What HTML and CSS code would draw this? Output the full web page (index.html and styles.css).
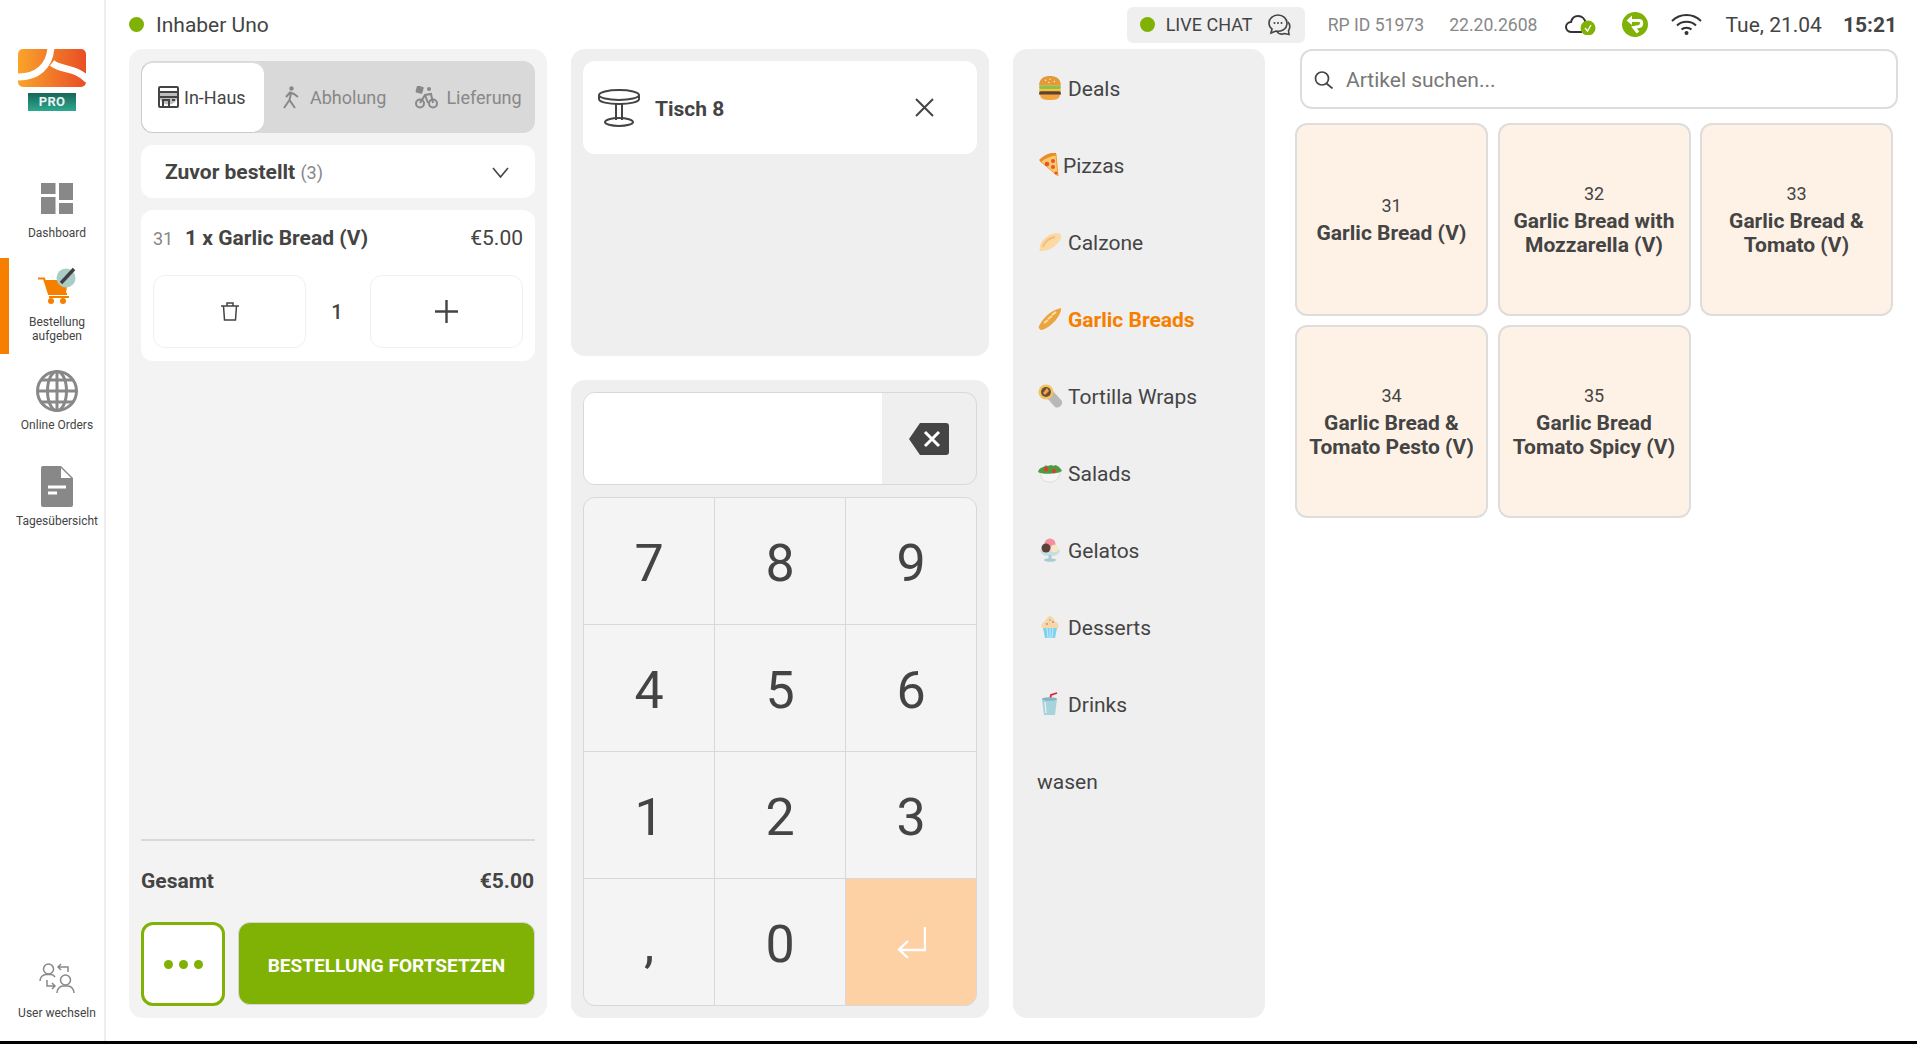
FILE: index.html
```html
<!DOCTYPE html>
<html lang="de">
<head>
<meta charset="utf-8">
<title>Bestellung</title>
<link rel="stylesheet" href="styles.css">
</head>
<body>
<div class="app">
  <aside class="sidebar">
    <div class="brand">
      <svg class="logo" viewBox="0 0 68 38">
        <defs>
          <linearGradient id="lg" x1="0" x2="1" y1="0" y2="0"><stop offset="0" stop-color="#f9a42b"/><stop offset="1" stop-color="#e94e25"/></linearGradient>
          <clipPath id="lc"><rect width="68" height="38" rx="5"/></clipPath>
        </defs>
        <g clip-path="url(#lc)">
          <rect width="68" height="38" fill="url(#lg)"/>
          <path d="M33-2C32 16 20 29-2 28" fill="none" stroke="#fff" stroke-width="7"/>
          <path d="M34 14C44 22 56 17 70 31" fill="none" stroke="#fff" stroke-width="7"/>
        </g>
      </svg>
      <div class="pro">PRO</div>
    </div>
    <nav class="nav">
      <a class="nav-item nav-dashboard">
        <svg class="nav-icon" width="32" height="31" viewBox="0 0 32 31"><g fill="#888"><rect width="14.5" height="11"/><rect y="14" width="14.5" height="17"/><rect x="18" width="14.5" height="17"/><rect x="18" y="20" width="14.5" height="11"/></g></svg>
        <span>Dashboard</span>
      </a>
      <a class="nav-item nav-active">
        <svg class="nav-icon" width="38" height="37" viewBox="0 0 38 37">
          <path d="M0 11.500H6L11 27H29" fill="none" stroke="#f77f00" stroke-width="2.200"/>
          <path d="M7 13H30L28 26H11Z" fill="#f77f00"/>
          <path d="M11 29H31V31H11Z" fill="#f77f00"/>
          <circle cx="13" cy="34" r="3" fill="#f77f00"/><circle cx="25" cy="34" r="3" fill="#f77f00"/>
          <circle cx="28" cy="11" r="9.500" fill="#a9cdc6"/>
          <path d="M23 16L36 2" stroke="#3f3f3f" stroke-width="3.400"/>
        </svg>
        <span>Bestellung<br>aufgeben</span>
      </a>
      <a class="nav-item nav-online">
        <svg class="nav-icon" width="42" height="42" viewBox="0 0 42 42"><g fill="none" stroke="#888" stroke-width="3"><circle cx="21" cy="21" r="19.500"/><ellipse cx="21" cy="21" rx="9.500" ry="19.500"/><path d="M21 1V41M2 21H40M5 10H37M5 32H37"/></g></svg>
        <span>Online Orders</span>
      </a>
      <a class="nav-item nav-report">
        <svg class="nav-icon" width="32" height="41" viewBox="0 0 32 41"><path d="M2 0H20L32 12V39a2 2 0 0 1-2 2H2a2 2 0 0 1-2-2V2a2 2 0 0 1 2-2Z" fill="#888"/><path d="M20 2L30 12H20Z" fill="#fff"/><path d="M7 21H25M7 27H16" stroke="#fff" stroke-width="3"/></svg>
        <span>Tagesübersicht</span>
      </a>
    </nav>
    <a class="nav-item nav-user">
      <svg class="nav-icon" width="36" height="30" viewBox="0 0 36 30"><g fill="none" stroke="#888" stroke-width="1.500"><circle cx="9.500" cy="6" r="5"/><path d="M1 18C1 14 4 11.500 7 11.500H12C14 11.500 15 12.500 16 14"/><circle cx="26.500" cy="17" r="5"/><path d="M18 30C18 26 21 23 24 23H29C32 23 35 26 35 30"/><path d="M29 9V4H19M22 1L19 4L22 7"/><path d="M8 17V23H16M13 20L16 23L13 26"/></g></svg>
      <span>User wechseln</span>
    </a>
  </aside>

  <main class="main">
    <header class="topbar">
      <span class="dot"></span>
      <span class="user-name">Inhaber Uno</span>
      <div class="top-right">
        <div class="live-chat">
          <span class="dot dot-chat"></span>
          <span>LIVE CHAT</span>
          <svg width="23" height="22" viewBox="0 0 23 22"><g fill="none" stroke="#444" stroke-width="1.600"><path d="M10 1C5 1 1 4.500 1 9C1 11.500 2 13.500 4 15L3 19L8 17C12 18 19 16 19 9C19 4.500 15 1 10 1Z"/><path d="M20 8C22 10 22.500 14 20.500 16.500L21 20.500L16.500 19.500C14 20.500 11 20 9 18"/></g><g fill="#444"><circle cx="6.500" cy="9" r="1"/><circle cx="10" cy="9" r="1"/><circle cx="13.500" cy="9" r="1"/></g></svg>
        </div>
        <span class="meta meta-id">RP ID 51973</span>
        <span class="meta">22.20.2608</span>
        <svg class="cloud" width="31" height="20" viewBox="0 0 31 20"><path d="M7 17C3 17 1 14.500 1 12C1 9 3.500 7 6 7C7 3 10 1 13 1C17 1 20 4 20.500 8" fill="none" stroke="#333" stroke-width="2"/><path d="M7 17H17" stroke="#333" stroke-width="2"/><circle cx="23" cy="13" r="7.500" fill="#7fb204"/><path d="M20 13L22.500 16L26 10" fill="none" stroke="#fff" stroke-width="1.300"/></svg>
        <svg class="sync" width="26" height="25" viewBox="0 0 26 25"><ellipse cx="13" cy="12.500" rx="13" ry="12.500" fill="#7fb204"/><path d="M8 8.500H17C20.500 8.500 20.500 13.500 17 14.500L12 15.500L16 20.500" fill="none" stroke="#fff" stroke-width="3.200"/><path d="M10 3.500L4.500 8.500L10 13" fill="#fff"/></svg>
        <svg class="wifi" width="31" height="21" viewBox="0 0 31 21"><g fill="none" stroke="#333" stroke-width="2"><path d="M1 7C9-1 22-1 30 7"/><path d="M6 11.500C11 6.500 20 6.500 25 11.500"/><path d="M10.500 15.500C13 13 18 13 20.500 15.500"/></g><circle cx="15.500" cy="19" r="2" fill="#333"/></svg>
        <span class="date">Tue, 21.04</span>
        <strong class="time">15:21</strong>
      </div>
    </header>

    <div class="columns">
      <section class="panel panel-order">
        <div class="tabs">
          <div class="tab tab-active">
            <svg width="21" height="22" viewBox="0 0 21 22"><g fill="none" stroke="#444" stroke-width="2"><rect x="1" y="1" width="19" height="20" rx="1"/><path d="M1 6H20M1 11H20M5 21V14H11V21M14 14H17"/></g><path d="M1 6H20V9a2 2 0 0 1-19 0Z" fill="#444" opacity=".35"/></svg>
            <span>In-Haus</span>
          </div>
          <div class="tab tab-pickup">
            <svg width="16" height="23" viewBox="0 0 16 23"><circle cx="8.500" cy="2.500" r="2.200" fill="#888"/><path d="M3 11L7 6.500L11 8L15 11M8 7L6.500 14L12 22M6.500 14L1 22" fill="none" stroke="#888" stroke-width="2"/></svg>
            <span>Abholung</span>
          </div>
          <div class="tab tab-delivery">
            <svg width="23" height="23" viewBox="0 0 23 23"><rect x="1" y="0" width="7" height="7" rx="1" transform="rotate(15 4 4)" fill="#888"/><circle cx="14" cy="3" r="2" fill="#888"/><g fill="none" stroke="#888" stroke-width="2"><circle cx="5" cy="17.500" r="4"/><circle cx="18" cy="17.500" r="4"/><path d="M5 17L10 9L16 8L18 17M10 9L13 17"/></g></svg>
            <span>Lieferung</span>
          </div>
        </div>
        <div class="previous">
          <span class="previous-title">Zuvor bestellt <span class="previous-count">(3)</span></span>
          <svg width="17" height="11" viewBox="0 0 17 11"><path d="M1 1L8.500 10L16 1" fill="none" stroke="#444" stroke-width="1.600"/></svg>
        </div>
        <div class="item">
          <div class="item-row">
            <span class="item-no">31</span>
            <strong class="item-name">1 x Garlic Bread (V)</strong>
            <span class="item-price">€5.00</span>
          </div>
          <div class="item-actions">
            <div class="qty-btn">
              <svg width="18" height="19" viewBox="0 0 18 19"><g fill="none" stroke="#444" stroke-width="1.500"><path d="M0 4H18M6 4V1H12V4M2.500 4L3.500 18H14.500L15.500 4"/></g></svg>
            </div>
            <span class="qty">1</span>
            <div class="qty-btn">
              <svg width="23" height="23" viewBox="0 0 23 23"><path d="M0 11.500H23M11.500 0V23" stroke="#444" stroke-width="2.400"/></svg>
            </div>
          </div>
        </div>
        <div class="spacer"></div>
        <div class="total">
          <span>Gesamt</span>
          <span>€5.00</span>
        </div>
        <div class="order-actions">
          <button class="more"><i></i><i></i><i></i></button>
          <button class="submit">BESTELLUNG FORTSETZEN</button>
        </div>
      </section>

      <div class="col-mid">
        <section class="panel panel-table">
          <div class="table-card">
            <svg width="42" height="38" viewBox="0 0 42 38"><g fill="none" stroke="#444" stroke-width="2"><ellipse cx="21" cy="6" rx="20" ry="5"/><path d="M1 6V10C1 13 10 15 21 15C32 15 41 13 41 10V6"/><path d="M18 15V31M24 15V31"/><ellipse cx="21" cy="33" rx="14" ry="4"/></g></svg>
            <strong class="table-name">Tisch 8</strong>
            <svg class="table-close" width="19" height="19" viewBox="0 0 19 19"><path d="M1 1L18 18M18 1L1 18" stroke="#444" stroke-width="2"/></svg>
          </div>
        </section>
        <section class="panel panel-pad">
          <div class="display">
            <div class="display-input"></div>
            <div class="display-del">
              <svg width="40" height="32" viewBox="0 0 40 32"><path d="M11 0H37a3 3 0 0 1 3 3V29a3 3 0 0 1-3 3H11L0 16Z" fill="#444"/><path d="M16 9L30 23M30 9L16 23" stroke="#fff" stroke-width="3"/></svg>
            </div>
          </div>
          <div class="keys">
            <div class="key">7</div><div class="key">8</div><div class="key">9</div>
            <div class="key">4</div><div class="key">5</div><div class="key">6</div>
            <div class="key">1</div><div class="key">2</div><div class="key">3</div>
            <div class="key">,</div><div class="key">0</div>
            <div class="key key-enter"><svg width="29" height="31" viewBox="0 0 29 31"><path d="M28 0V23H2M11 14L2 22.500L11 31" fill="none" stroke="#fff" stroke-width="2.400"/></svg></div>
          </div>
        </section>
      </div>

      <section class="panel panel-cats">
        <div class="cat">
          <svg class="cat-icon" viewBox="1 1 20 22"><path d="M1 10C1 3 6 1 11 1S21 3 21 10Z" fill="#e59a3a"/><rect x="1" y="10" width="20" height="3" rx="1.500" fill="#8bc34a"/><rect x="1" y="13" width="20" height="2.500" fill="#fbc02d"/><rect x="1" y="15" width="20" height="3.500" rx="1.500" fill="#5d4037"/><path d="M2 18H20C20 22 17 23 11 23S2 22 2 18Z" fill="#f2a53f"/><g fill="#fbe9c9"><circle cx="7" cy="5" r=".7"/><circle cx="11" cy="4" r=".7"/><circle cx="15" cy="6" r=".7"/><circle cx="10" cy="7" r=".7"/></g></svg>
          <span>Deals</span>
        </div>
        <div class="cat cat-pizza">
          <svg class="cat-icon" viewBox="0 0 20 24"><path d="M1 8L17 1L19 23Z" fill="#fbc86a" stroke="#f0a030"/><path d="M1 8C6 3 12 1 17 1" fill="none" stroke="#e98d28" stroke-width="3"/><g fill="#e8522f"><circle cx="8" cy="11" r="2.300"/><circle cx="14" cy="8" r="2"/><circle cx="14" cy="14" r="2"/><circle cx="17" cy="20" r="1.600"/></g></svg>
          <span>Pizzas</span>
        </div>
        <div class="cat">
          <svg class="cat-icon" viewBox="0 0 24 20"><path d="M2 19C0 11 8 2 19 1C22 1 24 4 23 6C20 13 12 19 4 19Z" fill="#fbd9a4"/><path d="M5 15C6 10 11 6 17 5" fill="none" stroke="#f4bd75" stroke-width="2"/></svg>
          <span>Calzone</span>
        </div>
        <div class="cat cat-active">
          <svg class="cat-icon" viewBox="0 0 24 24"><path d="M1 19C6 9 14 3 23 1C24 7 14 20 4 23C2 23 0 21 1 19Z" fill="#eda43f"/><path d="M6 16L10 13M10 12L14 9M14 8L18 5" stroke="#fbe2ae" stroke-width="1.800"/></svg>
          <span>Garlic Breads</span>
        </div>
        <div class="cat">
          <svg class="cat-icon" viewBox="0 0 24 24"><path d="M7 12L14 6L24 17C25 21 21 25 17 23Z" fill="#b8b8b8"/><circle cx="8" cy="8" r="7.500" fill="#f3c35c"/><circle cx="8" cy="8" r="5" fill="#6d4c41"/><path d="M5 9L9 4L11 7L7 11Z" fill="#f2a53f"/></svg>
          <span>Tortilla Wraps</span>
        </div>
        <div class="cat">
          <svg class="cat-icon" viewBox="0 0 24 20"><path d="M2 9H22C22 15 18 19 12 19S2 15 2 9Z" fill="#f5f5f5" stroke="#ddd"/><path d="M0 9C2 3 6 5 8 2C10 5 13 0 15 3C18 1 22 4 24 8C20 11 4 12 0 9Z" fill="#4f9a3e"/><circle cx="8" cy="6" r="2.200" fill="#e53935"/><circle cx="16" cy="8" r="2" fill="#e53935"/></svg>
          <span>Salads</span>
        </div>
        <div class="cat">
          <svg class="cat-icon" viewBox="0 0 22 24"><path d="M1 12C2 17 6 18 11 18S20 17 21 12Z" fill="#c5dde3"/><path d="M9.500 17H12.500V21H9.500Z" fill="#a9ccd3"/><ellipse cx="11" cy="22" rx="6" ry="1.800" fill="#a9ccd3"/><circle cx="11" cy="6" r="5.500" fill="#f48fa0"/><circle cx="7" cy="10" r="4.500" fill="#5d4037"/><circle cx="15.500" cy="10.500" r="3.800" fill="#f6e6c5"/></svg>
          <span>Gelatos</span>
        </div>
        <div class="cat">
          <svg class="cat-icon" viewBox="0 0 20 24"><path d="M3 13H17L15 23H5Z" fill="#7fd1f2"/><path d="M2 13C0 9 4 7 5 6C6 3 9 1 10 1S14 3 15 6C16 7 20 9 18 13Z" fill="#f6d7a8"/><g fill="#e57373"><circle cx="7" cy="9" r=".9"/><circle cx="13" cy="7" r=".9"/></g><circle cx="10" cy="5" r=".9" fill="#81c784"/><path d="M7 13L8 23M10 13V23M13 13L12 23" stroke="#d6f0fb" stroke-width=".8"/></svg>
          <span>Desserts</span>
        </div>
        <div class="cat">
          <svg class="cat-icon" viewBox="0 0 20 24"><path d="M10 8L11 3L17 1" fill="none" stroke="#e0213f" stroke-width="1.800"/><path d="M2 7H17L15 23H4Z" fill="#a9d3dc"/><ellipse cx="9.500" cy="7" rx="7.500" ry="1.800" fill="#7fb7c2"/><path d="M5 10L6 21" stroke="#e3f3f6" stroke-width="1.200"/></svg>
          <span>Drinks</span>
        </div>
        <div class="cat cat-plain"><span>wasen</span></div>
      </section>

      <section class="col-items">
        <label class="search">
          <svg width="20" height="18" viewBox="0 0 20 18"><g fill="none" stroke="#444" stroke-width="1.700"><circle cx="8" cy="7.500" r="6.500"/><path d="M12.500 12.500L18.500 17.500"/></g></svg>
          <span>Artikel suchen...</span>
        </label>
        <div class="grid">
          <div class="tile"><span>31</span><strong>Garlic Bread (V)</strong></div>
          <div class="tile"><span>32</span><strong>Garlic Bread with Mozzarella (V)</strong></div>
          <div class="tile"><span>33</span><strong>Garlic Bread &amp; Tomato (V)</strong></div>
          <div class="tile"><span>34</span><strong>Garlic Bread &amp; Tomato Pesto (V)</strong></div>
          <div class="tile"><span>35</span><strong>Garlic Bread Tomato Spicy (V)</strong></div>
        </div>
      </section>
    </div>
  </main>
</div>
</body>
</html>
```

FILE: styles.css
```css
* { box-sizing: border-box; }
html, body { margin: 0; height: 100%; background: #000; }
body { font-family: Roboto, "Liberation Sans", sans-serif; color: #444; overflow: hidden; }
svg { display: block; flex: none; }
strong { font-weight: 700; }

.app { display: flex; height: 1041px; background: #fff; }

/* Sidebar */
.sidebar { width: 106px; flex: none; border-right: 2px solid #eee; display: flex; flex-direction: column; }
.brand { display: flex; flex-direction: column; align-items: center; padding-top: 49px; height: 162px; }
.logo { width: 68px; height: 38px; }
.pro { width: 48px; height: 18px; margin-top: 6px; background: linear-gradient(#17665a, #2ea88e); color: #e8f4f1; font-size: 13px; font-weight: 700; line-height: 18px; text-align: center; letter-spacing: .3px; }
.nav { flex: 1; }
.nav-item { display: flex; flex-direction: column; align-items: center; height: 96px; padding-left: 10px; font-size: 12px; line-height: 14px; text-align: center; color: #444; }
.nav-item span { display: block; }
.nav-dashboard { padding-top: 21px; }
.nav-dashboard span { margin-top: 12px; }
.nav-active { padding-top: 9px; padding-left: 1px; border-left: 9px solid #f77f00; }
.nav-active span { margin-top: 11px; }
.nav-online { padding-top: 16px; }
.nav-online span { margin-top: 6px; }
.nav-report { padding-top: 16px; }
.nav-report span { margin-top: 7px; }
.nav-user { height: 78px; padding-top: 0; }
.nav-user span { margin-top: 13px; }

/* Main */
.main { flex: 1; min-width: 0; display: flex; flex-direction: column; padding: 0 19px 23px 23px; }
.topbar { height: 49px; flex: none; display: flex; align-items: center; padding: 0 1px 0 0; }
.dot { width: 15px; height: 15px; border-radius: 50%; background: #7fb204; flex: none; }
.user-name { margin-left: 12px; font-size: 21px; }
.top-right { margin-left: auto; display: flex; align-items: center; }
.live-chat { width: 178px; height: 36px; background: #efefef; border-radius: 6px; display: flex; align-items: center; padding-left: 13px; font-size: 18px; margin-right: 23px; }
.dot-chat { margin-right: 11px; }
.live-chat svg { margin-left: 16px; }
.meta { font-size: 17.600px; color: #888; }
.meta-id { margin-right: 25px; }
.cloud { margin-left: 27px; }
.sync { margin-left: 26px; }
.wifi { margin-left: 23px; }
.date { margin-left: 24px; font-size: 21px; }
.time { margin-left: 21px; font-size: 21px; }

.columns { flex: 1; min-height: 0; display: flex; gap: 24px; }
.panel { border-radius: 14px; background: #efefef; }

/* Order */
.panel-order { width: 418px; flex: none; background: #f3f3f3; padding: 12px; display: flex; flex-direction: column; }
.tabs { height: 72px; flex: none; background: #d9d9d9; border-radius: 12px; display: flex; align-items: center; font-size: 18px; color: #888; }
.tab { display: flex; align-items: center; }
.tab-active { width: 123px; height: 71px; background: #fff; border: 1px solid #ccc; border-right: 0; border-top-color: #ddd; border-radius: 12px; color: #444; padding-left: 16px; gap: 5px; }
.tab-pickup { margin-left: 19px; gap: 11px; padding-top: 1px; }
.tab-delivery { margin-left: 29px; gap: 8px; padding-top: 1px; }
.previous { height: 53px; flex: none; margin-top: 12px; background: #fff; border-radius: 12px; display: flex; align-items: center; justify-content: space-between; padding: 1px 26px 0 24px; }
.previous-title { font-size: 21px; font-weight: 700; }
.previous-count { font-size: 18px; font-weight: 400; color: #888; }
.item { height: 151px; flex: none; margin-top: 12px; background: #fff; border-radius: 12px; padding: 0 12px; }
.item-row { height: 56px; display: flex; align-items: center; font-size: 21px; }
.item-no { width: 32px; font-size: 18px; color: #888; }
.item-name { flex: 1; }
.item-actions { display: flex; align-items: center; height: 73px; margin-top: 9px; }
.qty-btn { flex: 1; height: 73px; border: 1px solid #f0f0f0; border-radius: 12px; display: flex; align-items: center; justify-content: center; }
.qty { width: 64px; padding-right: 2px; text-align: center; font-size: 20px; font-weight: 500; }
.spacer { flex: 1; border-bottom: 2px solid #d9d9d9; }
.total { height: 81px; flex: none; display: flex; align-items: center; justify-content: space-between; font-size: 21px; font-weight: 700; padding: 0 1px 2px 0; }
.order-actions { display: flex; gap: 13px; height: 84px; flex: none; }
.more { width: 84px; height: 84px; background: #fff; border: 3px solid #7fb204; border-radius: 12px; display: flex; align-items: center; justify-content: center; gap: 6px; padding: 0; }
.more i { width: 9px; height: 9px; border-radius: 50%; background: #7fb204; }
.submit { width: 297px; height: 83px; background: #7fb204; border: 1px solid #d6d6d6; border-radius: 12px; color: #fff; font: 700 19px Roboto, "Liberation Sans", sans-serif; padding: 3px 0 0; }

/* Middle */
.col-mid { width: 418px; flex: none; display: flex; flex-direction: column; gap: 24px; }
.panel-table { height: 307px; flex: none; padding: 12px; }
.table-card { height: 93px; background: #fff; border-radius: 12px; display: flex; align-items: center; padding: 0 43px 0 15px; }
.table-name { margin-left: 15px; padding-top: 2px; font-size: 21px; }
.table-close { margin-left: auto; }
.panel-pad { flex: 1; padding: 12px; display: flex; flex-direction: column; gap: 12px; }
.display { height: 93px; flex: none; display: flex; border: 1px solid #d8d8d8; border-radius: 12px; overflow: hidden; }
.display-input { flex: 1; background: #fff; }
.display-del { width: 94px; display: flex; align-items: center; justify-content: center; }
.keys { flex: 1; display: grid; grid-template-columns: repeat(3, 1fr); grid-template-rows: repeat(4, 1fr); gap: 1px; background: #d8d8d8; border: 1px solid #d8d8d8; border-radius: 12px; overflow: hidden; }
.key { background: #f4f4f4; display: flex; align-items: center; justify-content: center; padding-top: 5px; font-size: 52px; color: #444; }
.key-enter { background: #fed1a5; padding-top: 0; }

/* Categories */
.panel-cats { width: 252px; flex: none; padding: 0 0 0 25px; }
.cat { height: 77px; display: flex; align-items: center; padding-top: 3px; font-size: 21px; }
.cat-icon { width: 24px; height: 24px; margin: -3px 6px 0 0; }
.cat-pizza .cat-icon { width: 20px; margin: -3px 4px 0 1px; }
.cat-active { color: #f77f00; font-weight: 700; }
.cat-plain { margin-left: -1px; }

/* Items */
.col-items { width: 603px; flex: none; margin-left: 6px; }
.search { height: 60px; margin-left: 5px; border: 2px solid #ddd; border-radius: 12px; display: flex; align-items: center; padding: 1px 0 0 12px; gap: 12px; font-size: 21px; color: #777; }
.grid { margin-top: 14px; display: grid; grid-template-columns: repeat(3, 193px); grid-auto-rows: 193px; column-gap: 9.500px; row-gap: 9px; }
.tile { background: #fef2e6; border: 2px solid #ddd; border-radius: 12px; display: flex; flex-direction: column; align-items: center; justify-content: center; text-align: center; padding: 1px 8px 0; font-size: 18px; }
.tile span { line-height: 22px; margin-bottom: 4px; }
.tile strong { font-size: 21px; line-height: 24px; }
```
